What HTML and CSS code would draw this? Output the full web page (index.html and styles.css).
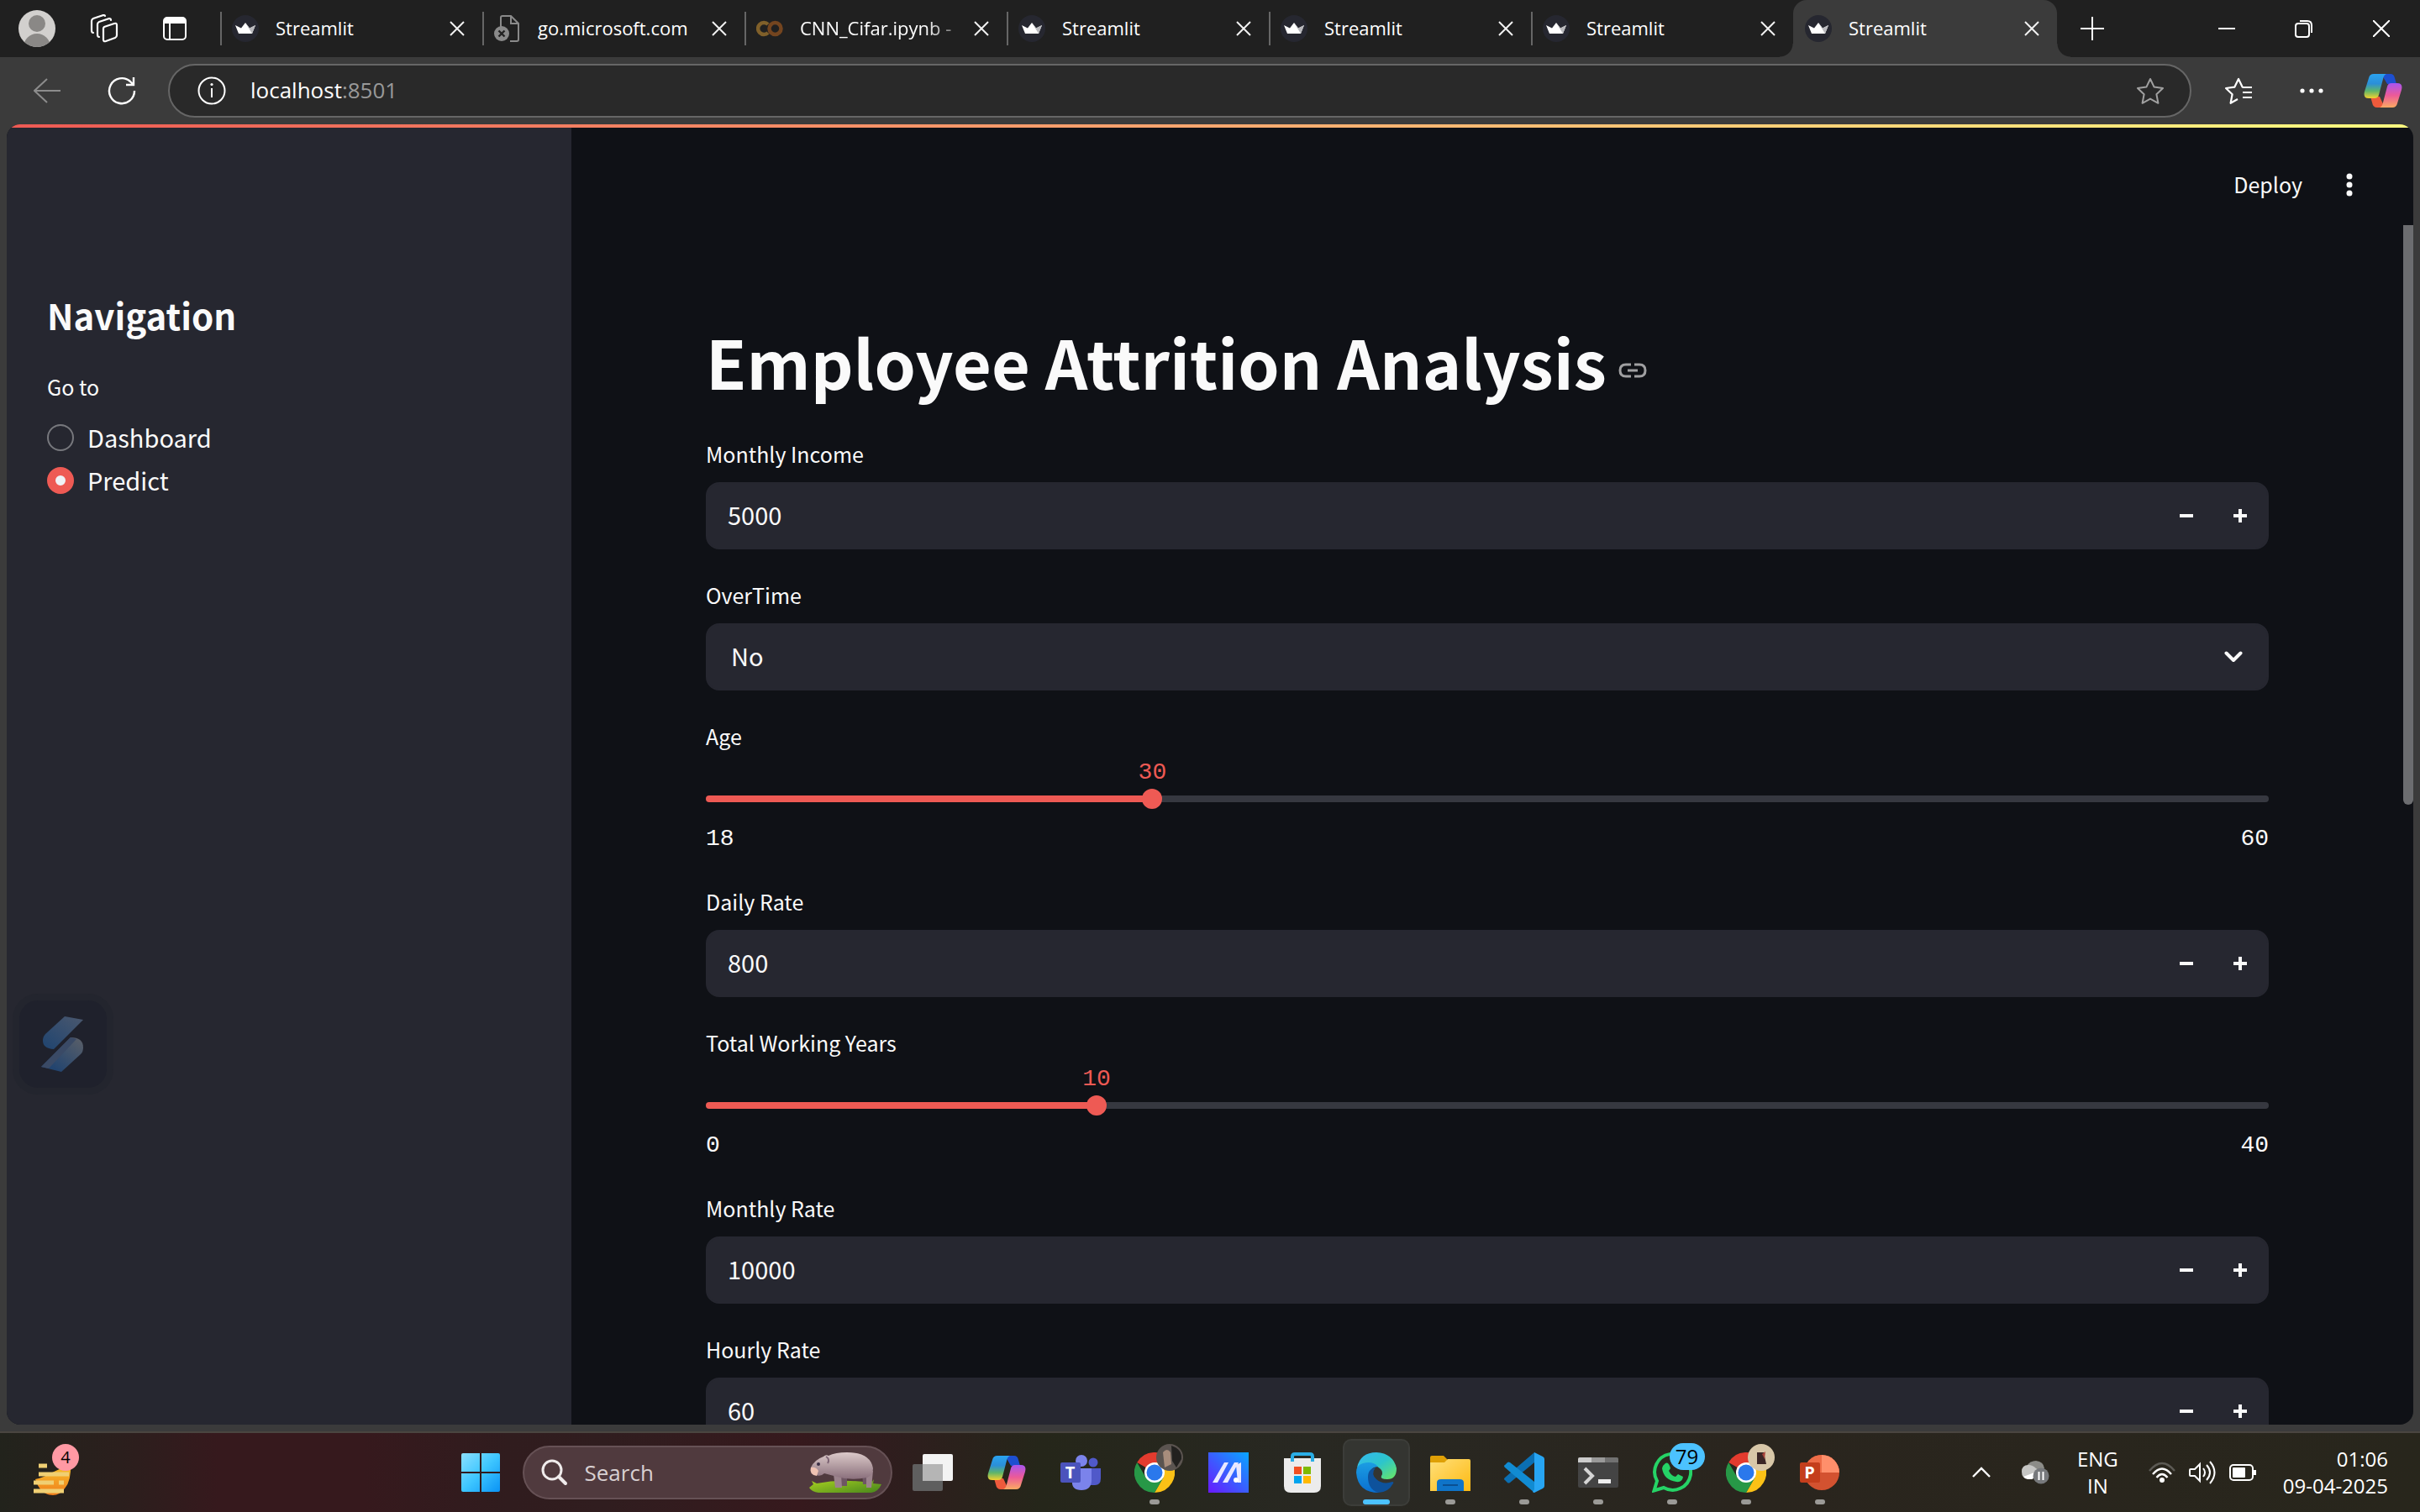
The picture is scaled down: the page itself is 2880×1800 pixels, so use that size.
FILE: index.html
```html
<!DOCTYPE html>
<html lang="en">
<head>
<meta charset="utf-8">
<title>Streamlit</title>
<link rel="stylesheet" href="styles.css">
</head>
<body>
<svg class="defs" aria-hidden="true">
  <defs>
    <linearGradient id="cpA" x1="0" y1="0" x2="0" y2="1"><stop offset="0" stop-color="#2aa3f0"/><stop offset=".4" stop-color="#2b8fd8"/><stop offset=".7" stop-color="#5fb56a"/><stop offset="1" stop-color="#f4d12e"/></linearGradient>
    <linearGradient id="cpB" x1="0" y1="0" x2="0" y2="1"><stop offset="0" stop-color="#a855f0"/><stop offset=".5" stop-color="#ec5a98"/><stop offset="1" stop-color="#fbaa62"/></linearGradient>
    <linearGradient id="win" x1="0" y1="0" x2="1" y2="1"><stop offset="0" stop-color="#8be0ff"/><stop offset=".5" stop-color="#3ec6ff"/><stop offset="1" stop-color="#0a93f5"/></linearGradient>
    <linearGradient id="arm" x1="0" y1="1" x2="1" y2="0"><stop offset="0" stop-color="#6a18ff"/><stop offset="1" stop-color="#08a6ff"/></linearGradient>
    <linearGradient id="edgeTop" x1="0" y1="0" x2="1" y2="1"><stop offset="0" stop-color="#35b8f0"/><stop offset=".5" stop-color="#2cc5cc"/><stop offset="1" stop-color="#6ce860"/></linearGradient>
    <linearGradient id="edgeMid" x1="0" y1="0" x2="0" y2="1"><stop offset="0" stop-color="#1b9de2"/><stop offset="1" stop-color="#0a6fd0"/></linearGradient>
    <linearGradient id="folder" x1="0" y1="0" x2="1" y2="1"><stop offset="0" stop-color="#ffe07a"/><stop offset="1" stop-color="#fdb912"/></linearGradient>
    <linearGradient id="logoA" x1="0" y1="1" x2="1" y2="0"><stop offset="0" stop-color="#1f4470"/><stop offset="1" stop-color="#4b586e"/></linearGradient>
    <linearGradient id="logoB" x1="0" y1="1" x2="1" y2="0"><stop offset=".2" stop-color="#22446f"/><stop offset="1" stop-color="#5c6068"/></linearGradient>
    <linearGradient id="hippo" x1="0" y1="0" x2="0" y2="1"><stop offset="0" stop-color="#dccaca"/><stop offset=".5" stop-color="#b39da2"/><stop offset="1" stop-color="#8a6f7c"/></linearGradient>
    <linearGradient id="grass" x1="0" y1="0" x2="1" y2="1"><stop offset="0" stop-color="#b2da21"/><stop offset="1" stop-color="#47851c"/></linearGradient>
    <linearGradient id="sun" x1="0" y1="0" x2="0" y2="1"><stop offset="0" stop-color="#f8c52d"/><stop offset="1" stop-color="#f07d1c"/></linearGradient>

    <symbol id="crown" viewBox="0 0 32 32"><circle cx="16" cy="16" r="16" fill="#262730"/><path d="M4 12l7 3.500L16 9l5 6.500 7-3.500-4 10H8z" fill="#fff"/><path d="M16 9l5 6.500 7-3.500-4 10z" fill="#b9b9bd"/></symbol>
    <symbol id="cross" viewBox="0 0 20 20"><path d="M2 2l16 16M18 2L2 18" fill="none" stroke="#f2f2f2" stroke-width="2"/></symbol>
    <symbol id="copilot" viewBox="0 0 46 42">
      <path d="M21 1h11q4 0 5 5l2 7H28z" fill="#1d4fd0"/>
      <path d="M25 41H16q-5 0-6-6l-2-7h11z" fill="#ee5a3c"/>
      <path d="M12 1h15q-3 1-4 6l-5 19q-1 4-5 4H6q-7 0-5-8L6 6q1-5 6-5z" fill="url(#cpA)"/>
      <path d="M34 41H19q3-1 4-6l5-19q1-4 5-4h7q7 0 5 8l-5 16q-1 5-6 5z" fill="url(#cpB)"/>
    </symbol>
    <symbol id="chrome" viewBox="0 0 48 48">
      <path d="M24 24L3.200 12A24 24 0 0 1 44.800 12H24z" fill="#e33b2e"/>
      <path d="M24 24L44.800 12A24 24 0 0 1 24 48l10.400-18z" fill="#fbc116"/>
      <path d="M24 24l10.400 6L24 48A24 24 0 0 1 3.200 12l10.400 18z" fill="#279847"/>
      <path d="M24 12h20.800L34 24z" fill="#fbc116"/>
      <circle cx="24" cy="24" r="12" fill="#fff"/><circle cx="24" cy="24" r="9.500" fill="#2a78ec"/>
    </symbol>
  </defs>
</svg>

<div class="desktop">
<header class="browser">
  <div class="tabstrip">
    <button class="icon-btn profile" aria-label="Profile"><svg width="46" height="46" viewBox="0 0 46 46"><clipPath id="pc"><circle cx="23" cy="23" r="22"/></clipPath><circle cx="23" cy="23" r="22" fill="#d2d0ce"/><g clip-path="url(#pc)" fill="#8a8886"><circle cx="23" cy="17" r="10"/><circle cx="23" cy="45" r="16"/></g></svg></button>
    <button class="icon-btn workspaces" aria-label="Workspaces"><svg width="34" height="34" viewBox="0 0 34 34" fill="none" stroke="#fff" stroke-width="2.200" stroke-linejoin="round" stroke-linecap="round"><path d="M17 15l12-4q3-1 3 2v12q0 2-2 3l-11 4q-3 1-3-2V17q0-1 1-2z"/><path d="M11 27q-2 0-2-3V12q0-2 2-3l12-4q2 0 2 2"/><path d="M4 22q-2 0-2-3V8q0-2 2-3l12-4q2 0 2 1"/></svg></button>
    <button class="icon-btn vertical" aria-label="Tab actions"><svg width="30" height="30" viewBox="0 0 30 30"><rect x="2" y="2" width="26" height="26" rx="4" fill="none" stroke="#fff" stroke-width="2"/><path d="M2 9V6q0-4 4-4h18q4 0 4 4v3z" fill="#fff"/><path d="M9 9v18" stroke="#fff" stroke-width="2"/></svg></button>
    <nav class="tabs" aria-label="Tabs">
      <div class="tab"><svg class="fav"><use href="#crown"/></svg><span class="tab-title">Streamlit</span><button class="tab-close" aria-label="Close tab"><svg><use href="#cross"/></svg></button></div>
      <div class="tab"><svg class="fav" viewBox="0 0 32 32"><path d="M8 14V3q0-2 2-2h10l9 9v19q0 2-2 2h-8M20 1v9h9" fill="none" stroke="#8a8a8a" stroke-width="2"/><circle cx="9" cy="22" r="9" fill="#8a8a8a"/><path d="M5.500 18.500l7 7m0-7l-7 7" stroke="#222" stroke-width="2.400"/></svg><span class="tab-title">go.microsoft.com</span><button class="tab-close" aria-label="Close tab"><svg><use href="#cross"/></svg></button></div>
      <div class="tab"><svg class="fav" viewBox="0 0 32 32" fill="none" stroke-width="4.500"><circle cx="22.500" cy="16" r="7" stroke="#74451f"/><path d="M14 11a7 7 0 1 0 0 10" stroke="#80602a"/></svg><span class="tab-title fade">CNN_Cifar.ipynb -</span><button class="tab-close" aria-label="Close tab"><svg><use href="#cross"/></svg></button></div>
      <div class="tab"><svg class="fav"><use href="#crown"/></svg><span class="tab-title">Streamlit</span><button class="tab-close" aria-label="Close tab"><svg><use href="#cross"/></svg></button></div>
      <div class="tab"><svg class="fav"><use href="#crown"/></svg><span class="tab-title">Streamlit</span><button class="tab-close" aria-label="Close tab"><svg><use href="#cross"/></svg></button></div>
      <div class="tab"><svg class="fav"><use href="#crown"/></svg><span class="tab-title">Streamlit</span><button class="tab-close" aria-label="Close tab"><svg><use href="#cross"/></svg></button></div>
      <div class="tab active"><svg class="fav"><use href="#crown"/></svg><span class="tab-title">Streamlit</span><button class="tab-close" aria-label="Close tab"><svg><use href="#cross"/></svg></button></div>
    </nav>
    <button class="icon-btn newtab" aria-label="New tab"><svg width="28" height="28" viewBox="0 0 28 28"><path d="M14 0v28M0 14h28" stroke="#fff" stroke-width="2"/></svg></button>
    <div class="window-controls">
      <button class="icon-btn" aria-label="Minimize"><svg width="20" height="20" viewBox="0 0 20 20"><path d="M0 10h20" stroke="#fff" stroke-width="2"/></svg></button>
      <button class="icon-btn" aria-label="Restore"><svg width="22" height="22" viewBox="0 0 22 22" fill="none" stroke="#fff" stroke-width="2"><rect x="1" y="5" width="16" height="16" rx="3"/><path d="M6 2h9q5 0 5 5v9"/></svg></button>
      <button class="icon-btn" aria-label="Close"><svg width="20" height="20" viewBox="0 0 20 20"><path d="M0 0l20 20M20 0L0 20" stroke="#fff" stroke-width="2"/></svg></button>
    </div>
  </div>
  <div class="toolbar">
    <button class="icon-btn" aria-label="Back"><svg width="32" height="30" viewBox="0 0 32 30"><path d="M16 1L1 15l15 14M1 15h31" fill="none" stroke="#8c8c8c" stroke-width="2"/></svg></button>
    <button class="icon-btn" aria-label="Reload"><svg width="34" height="34" viewBox="0 0 34 34" fill="none" stroke="#fff" stroke-width="2.400"><path d="M32 17a15 15 0 1 1-5-11l4 4M31 1v9h-9"/></svg></button>
    <div class="address">
      <svg width="34" height="34" viewBox="0 0 34 34"><circle cx="17" cy="17" r="15.500" fill="none" stroke="#fff" stroke-width="2"/><path d="M17 14v11" stroke="#fff" stroke-width="2"/><circle cx="17" cy="9.500" r="1.600" fill="#fff"/></svg>
      <span class="url">localhost<span class="port">:8501</span></span>
      <button class="icon-btn star" aria-label="Add to favorites"><svg width="34" height="32" viewBox="0 0 34 32"><path d="M17 2l4.600 9.600 10.400 1.400-7.600 7.200 2 10.600L17 25.600 7.600 30.800l2-10.600L2 13l10.400-1.400z" fill="none" stroke="#a0a0a0" stroke-width="2" stroke-linejoin="round"/></svg></button>
    </div>
    <button class="icon-btn" aria-label="Favorites"><svg width="34" height="32" viewBox="0 0 34 32" fill="none" stroke="#fff" stroke-width="2.200" stroke-linejoin="round"><path d="M22 11.600h-.400L17 2l-4.600 9.600L2 13l7.600 7.200-2 10.600L16 26M22 12h11M22 18h11M22 24h11"/></svg></button>
    <button class="icon-btn" aria-label="Settings"><svg width="28" height="6" viewBox="0 0 28 6" fill="#fff"><circle cx="3" cy="3" r="2.600"/><circle cx="14" cy="3" r="2.600"/><circle cx="25" cy="3" r="2.600"/></svg></button>
    <button class="icon-btn copilot" aria-label="Copilot"><svg width="46" height="42"><use href="#copilot"/></svg></button>
  </div>
</header>

<div class="frame">
<div class="page">
  <div class="decoration"></div>
  <div class="app">
    <aside class="sidebar">
      <h2>Navigation</h2>
      <fieldset class="radio-group">
        <legend>Go to</legend>
        <label class="radio"><input type="radio" name="nav">Dashboard</label>
        <label class="radio"><input type="radio" name="nav" checked>Predict</label>
      </fieldset>
    </aside>
    <main class="main">
      <div class="app-header">
        <button class="deploy">Deploy</button>
        <button class="icon-btn kebab" aria-label="Menu"><svg width="8" height="28" viewBox="0 0 8 28" fill="#fafafa"><circle cx="4" cy="4" r="3.500"/><circle cx="4" cy="14" r="3.500"/><circle cx="4" cy="24" r="3.500"/></svg></button>
      </div>
      <form class="content">
        <h1>Employee Attrition Analysis <a href="#title" aria-label="Link to heading"><svg width="34" height="18" viewBox="0 0 34 18"><path d="M15 2H9q-7 0-7 7t7 7h6M19 2h6q7 0 7 7t-7 7h-6M11 9h12" fill="none" stroke="#a0a0a2" stroke-width="3"/></svg></a></h1>
        <div class="field">
          <label for="income">Monthly Income</label>
          <div class="number"><input id="income" type="number" value="5000"><button type="button" class="step minus" aria-label="Decrease"></button><button type="button" class="step plus" aria-label="Increase"></button></div>
        </div>
        <div class="field">
          <label for="overtime">OverTime</label>
          <div class="select"><select id="overtime"><option>No</option><option>Yes</option></select><svg width="22" height="14" viewBox="0 0 22 14"><path d="M2.500 2.500L11 11l8.500-8.500" fill="none" stroke="#fafafa" stroke-width="4" stroke-linecap="round" stroke-linejoin="round"/></svg></div>
        </div>
        <div class="field">
          <label for="age">Age</label>
          <div class="slider" style="--p:28.571%"><output for="age">30</output><div class="track"><input id="age" type="range" min="18" max="60" value="30"></div><div class="ticks"><span>18</span><span>60</span></div></div>
        </div>
        <div class="field">
          <label for="daily">Daily Rate</label>
          <div class="number"><input id="daily" type="number" value="800"><button type="button" class="step minus" aria-label="Decrease"></button><button type="button" class="step plus" aria-label="Increase"></button></div>
        </div>
        <div class="field">
          <label for="years">Total Working Years</label>
          <div class="slider" style="--p:25%"><output for="years">10</output><div class="track"><input id="years" type="range" min="0" max="40" value="10"></div><div class="ticks"><span>0</span><span>40</span></div></div>
        </div>
        <div class="field">
          <label for="monthly">Monthly Rate</label>
          <div class="number"><input id="monthly" type="number" value="10000"><button type="button" class="step minus" aria-label="Decrease"></button><button type="button" class="step plus" aria-label="Increase"></button></div>
        </div>
        <div class="field">
          <label for="hourly">Hourly Rate</label>
          <div class="number"><input id="hourly" type="number" value="60"><button type="button" class="step minus" aria-label="Decrease"></button><button type="button" class="step plus" aria-label="Increase"></button></div>
        </div>
      </form>
      <div class="scroll-thumb"></div>
    </main>
  </div>
  <button class="floating" aria-label="Extension"><svg width="52" height="68" viewBox="0 0 52 68"><path d="M28 1l22 4-35 35q-13-1-13-10 0-5 3-8z" fill="url(#logoA)"/><path d="M35 26q15 0 15 12 0 5-3 8L24 67 0 61z" fill="url(#logoB)"/><path d="M35 26l7 2L9 63l-9-2z" fill="#3a4a66"/></svg></button>
</div>
</div>

<footer class="taskbar">
  <div class="side widgets">
    <button class="icon-btn" aria-label="Widgets"><svg width="50" height="60" viewBox="0 0 50 60"><path d="M4 38q10-2 20-8l22-10q1 20-7 29-6 8-14 8-15 0-21-19z" fill="url(#sun)"/><path d="M8 22h10M8 32h36M2 42h24M32 42h6M2 52h36" stroke="#f0cf73" stroke-width="5"/></svg><span class="badge pink">4</span></button>
  </div>
  <div class="apps">
    <button class="icon-btn start" aria-label="Start"><svg width="46" height="46" viewBox="0 0 46 46"><path d="M0 2q0-2 2-2h20v22H0zM24 0h20q2 0 2 2v20H24zM0 24h22v22H2q-2 0-2-2zM24 24h22v20q0 2-2 2H24z" fill="url(#win)"/></svg></button>
    <label class="search"><svg width="32" height="32" viewBox="0 0 32 32"><circle cx="13" cy="13" r="11" fill="none" stroke="#efebeb" stroke-width="3"/><path d="M21 21l8 8" stroke="#efebeb" stroke-width="4" stroke-linecap="round"/></svg><input type="text" placeholder="Search" aria-label="Search">
      <svg width="88" height="48" viewBox="0 0 88 48"><path d="M1 42l5-4-2-4 6 3q30-6 62-1l2-7 2 6 2-3-1 5 10 1q-4 9-12 10H12Q4 47 1 42z" fill="url(#grass)"/><path d="M38 24h8v16h-7zM64 22h8l-1 16h-6z" fill="#6e5663"/><path d="M30 26h9l1 16h-8zM69 22h8l-2 20h-6z" fill="#9b838c"/><path d="M3 18q4-9 15-13 3-3 6-1 8-4 22-4 28 0 31 19 0 8-7 11-20 4-36-1l-15-4q-4 4-10 2-8-1-6-9z" fill="url(#hippo)"/><path d="M3 18q6-1 9 4l-2 6q-9-1-7-10z" fill="#efc2b2"/><circle cx="12" cy="14" r="2" fill="#3a2f45"/><path d="M21 5q5 3 2 8" stroke="#7d6474" fill="none" stroke-width="2"/></svg></label>
    <div class="pins">
    <button class="app-btn" aria-label="Task view"><svg viewBox="0 0 48 48"><rect x="12" y="2" width="36" height="32" rx="2" fill="#f3f3f3"/><rect y="14" width="36" height="32" rx="2" fill="#5f5f5f"/><rect x="12" y="14" width="24" height="20" fill="#b5b5b5"/></svg></button>
    <button class="app-btn" aria-label="Copilot"><svg viewBox="0 0 48 48"><use href="#copilot" x="1" y="3" width="46" height="42"/></svg></button>
    <button class="app-btn" aria-label="Teams"><svg viewBox="0 0 48 48"><circle cx="25" cy="10" r="7" fill="#7b83eb"/><circle cx="39" cy="12" r="5.500" fill="#5059c9"/><path d="M34 19h14v12q0 8-7 8h-7z" fill="#5059c9"/><path d="M14 19h23v14q0 12-12 12T14 34z" fill="#7b83eb"/><rect y="12" width="24" height="24" rx="2" fill="#4b53bc"/></svg><span class="glyph teams">T</span></button>
    <button class="app-btn running" aria-label="Chrome"><svg viewBox="0 0 48 48"><use href="#chrome"/></svg><svg class="person" viewBox="0 0 32 32"><circle cx="16" cy="16" r="16" fill="#5b5450"/><path d="M8 10q5-6 9 0l1 14-8 4z" fill="#a88d7c"/><path d="M18 2q13 4 12 16l-6 10-5-8z" fill="#22211f"/></svg></button>
    <button class="app-btn" aria-label="Armoury"><svg viewBox="0 0 48 48"><rect width="48" height="48" fill="url(#arm)"/><path d="M5 36l14-24h5L11 36zM17 36l14-24h5L23 36zM33 15l6-3v24h-4z" fill="#e8e8ff"/><circle cx="33" cy="33" r="3" fill="#fff"/></svg></button>
    <button class="app-btn" aria-label="Store"><svg viewBox="0 0 48 48"><path d="M2 7h44v33q0 8-8 8H10q-8 0-8-8z" fill="#ececec"/><path d="M12 11V5q0-3 3-3h18q3 0 3 3v6" fill="none" stroke="#2aaee6" stroke-width="4"/><path d="M14 17h9v9h-9z" fill="#f25022"/><path d="M25 17h9v9h-9z" fill="#7fba00"/><path d="M14 28h9v9h-9z" fill="#00a4ef"/><path d="M25 28h9v9h-9z" fill="#ffb900"/></svg></button>
    <button class="app-btn running current" aria-label="Edge"><svg viewBox="0 0 48 48"><path d="M1 18Q5 0 24 0q20 1 24 19 0 13-11 13-9 0-7-4 3-5-2-9-10-9-27-1z" fill="url(#edgeTop)"/><path d="M0 24q0-9 8-11 12-3 18 4-7 0-10 6-4 8 3 17 4 5 8 8Q2 48 0 24z" fill="url(#edgeMid)"/><path d="M14 29q0-9 9-11-6 8 1 14 8 7 19 3 2 0 1 2-6 11-18 11-12-4-12-19z" fill="#0e529c"/></svg></button>
    <button class="app-btn running" aria-label="File Explorer"><svg viewBox="0 0 48 48"><path d="M0 6q0-2 2-2h14l5 5v8H0z" fill="#dfa006"/><path d="M0 12h17l4-4h25q2 0 2 2v36H0z" fill="url(#folder)"/><path d="M8 46V36q0-4 5-4h22q5 0 5 4v10z" fill="#0f74c8"/><path d="M15 39h18" stroke="#0a4f91" stroke-width="2"/></svg></button>
    <button class="app-btn running" aria-label="VS Code"><svg viewBox="0 0 48 48"><path d="M1 30q-2 2 0 3l3 3q1 1 3 0L36 12V0z" fill="#0b6fb3"/><path d="M1 18q-2-2 0-3l3-3q1-1 3 0l29 23v13z" fill="#118bd2"/><path d="M36 0l10 5q2 1 2 3v32q0 2-2 3l-10 5q-1 0-2-1l2-3V4z" fill="#27a5f3"/></svg></button>
    <button class="app-btn running" aria-label="Terminal"><svg viewBox="0 0 48 48"><rect y="6" width="48" height="36" rx="2" fill="#444"/><path d="M0 12V8q0-2 2-2h14v6z" fill="#ccc"/><path d="M16 6h16v6H16z" fill="#999"/><path d="M32 6h14q2 0 2 2v4H32z" fill="#717171"/><path d="M8 19l9 9-9 9" fill="none" stroke="#d5d5d5" stroke-width="4"/><path d="M24 32h15v5H24z" fill="#eee"/></svg></button>
    <button class="app-btn running" aria-label="WhatsApp"><svg viewBox="0 0 48 48"><path d="M2.500 45.500L6 34A21.500 21.500 0 1 1 14 42z" fill="none" stroke="#25d366" stroke-width="4"/><path d="M16 13q3-2 5 3l1 3-2 3q3 6 8 7l3-3 6 3q-1 7-8 6-15-2-17-16 1-4 4-6z" fill="#25d366"/></svg><span class="badge blue">79</span></button>
    <button class="app-btn running" aria-label="Chrome second profile"><svg viewBox="0 0 48 48"><use href="#chrome"/></svg><svg class="person" viewBox="0 0 32 32"><circle cx="16" cy="16" r="16" fill="#d8c7a8"/><path d="M11 10h8l3 14H11z" fill="#3b2626"/><path d="M17 12l4-3-1 9z" fill="#a8433a"/></svg></button>
    <button class="app-btn running" aria-label="PowerPoint"><svg viewBox="0 0 48 48"><circle cx="26" cy="24" r="21" fill="#d35230"/><path d="M26 3a21 21 0 0 1 21 21H26z" fill="#ff8f6b"/><path d="M26 3v21H5A21 21 0 0 1 26 3z" fill="#ed6c47"/><rect y="12" width="24" height="24" rx="2" fill="#c43e1c"/></svg><span class="glyph ppt">P</span></button>
    </div>
  </div>
  <div class="side tray">
    <button class="icon-btn" aria-label="Hidden icons"><svg width="22" height="14" viewBox="0 0 22 14"><path d="M1 12L11 2l10 10" fill="none" stroke="#fff" stroke-width="2.400"/></svg></button>
    <button class="icon-btn" aria-label="OneDrive"><svg width="34" height="28" viewBox="0 0 34 28"><path d="M7 6q4-6 11-6 9 1 10 9l-14 8z" fill="#8c8c88"/><path d="M1 13q0-8 8-8 5 0 9 4l7 5-6 7H8q-7 0-7-8z" fill="#c6c6c4"/><path d="M3 19l13-5-2 8H8q-3 0-5-3z" fill="#fff"/><circle cx="24" cy="18" r="9.500" fill="#77797c"/><path d="M21.500 13v10M26.500 13v10" stroke="#fff" stroke-width="2"/></svg></button>
    <button class="lang">ENG<br>IN</button>
    <button class="status" aria-label="Network, volume, battery">
      <svg width="32" height="26" viewBox="0 0 32 26" fill="none" stroke="#fff" stroke-width="2.400"><path d="M1 11q15-18 30 0" stroke="#5c5a54"/><path d="M5 15q11-13 22 0M9.500 19q6.500-8 13 0"/><circle cx="16" cy="22" r="3" fill="#fff" stroke="none"/></svg>
      <svg width="32" height="28" viewBox="0 0 32 28" fill="none" stroke="#fff" stroke-width="2"><path d="M1 11q0-1 1-1h5l6-6v20l-6-6H2q-1 0-1-1z"/><path d="M17 9q4 5 0 10M21 5q8 9 0 18M25 1q11 13 0 26"/></svg>
      <svg width="32" height="22" viewBox="0 0 32 22"><rect x="1" y="2" width="27" height="18" rx="4" fill="none" stroke="#fff" stroke-width="2"/><rect x="4" y="5" width="15" height="12" rx="1" fill="#fff"/><path d="M29 8h3v6h-3z" fill="#fff"/></svg>
    </button>
    <button class="clock">01:06<br>09-04-2025</button>
  </div>
</footer>
</div>
</body>
</html>
```
FILE: styles.css
```css
* { box-sizing: border-box; }

body {
  margin: 0;
  background: #3b3b3b;
  color: #fff;
  font-family: "Open Sans", "Noto Sans", sans-serif;
}

button, input, select {
  font: inherit;
  color: inherit;
  border: 0;
  background: none;
  padding: 0;
  margin: 0;
}

svg { display: block; flex: none; }
.defs { position: absolute; width: 0; height: 0; }

.desktop { display: flex; flex-direction: column; height: 100vh; overflow: hidden; }

.icon-btn { display: flex; align-items: center; justify-content: center; }

/* Tab strip */
.tabstrip {
  display: flex;
  align-items: center;
  height: 68px;
  background: #202020;
}
.profile { width: 46px; margin-left: 21px; }
.workspaces { width: 34px; margin-left: 40px; }
.vertical { width: 30px; margin-left: 52px; }
.tabs { display: flex; flex: 0 1 2186px; height: 68px; margin-left: 39px; min-width: 0; }
.tab {
  position: relative;
  flex: 1 1 0;
  min-width: 0;
  display: flex;
  align-items: center;
  padding: 0 20px 0 12px;
  gap: 20px;
}
.tab::before {
  content: "";
  align-self: center;
  flex: none;
  width: 2px;
  height: 40px;
  margin: 0 -8px 0 -12px;
  background: #666;
}
.tab.active {
  background: #3b3b3b;
  border-radius: 16px 16px 0 0;
  padding-left: 14px;
}
.tab.active::before {
  position: absolute;
  left: -16px;
  bottom: 0;
  width: 16px;
  height: 16px;
  margin: 0;
  background: radial-gradient(circle at 0 0, #202020 15px, #3b3b3b 16px);
}
.tab.active::after {
  content: "";
  position: absolute;
  right: -16px;
  bottom: 0;
  width: 16px;
  height: 16px;
  background: radial-gradient(circle at 100% 0, #202020 15px, #3b3b3b 16px);
}
.fav { width: 32px; height: 32px; }
.tab-title {
  flex: 1;
  min-width: 0;
  padding-bottom: 2px;
  white-space: nowrap;
  font-size: 22px;
  line-height: 32px;
}
.tab-title.fade { mask-image: linear-gradient(90deg, #000 80%, transparent 110%); }
.tab-close { width: 20px; height: 20px; }
.tab-close svg { width: 20px; height: 20px; }
.newtab { width: 28px; margin-left: 28px; }
.window-controls { display: flex; margin-left: auto; }
.window-controls .icon-btn { width: 92px; height: 68px; }

/* Toolbar */
.toolbar {
  display: flex;
  align-items: center;
  height: 80px;
  padding: 0 21px 0 40px;
}
.toolbar > .icon-btn + .icon-btn { margin-left: 56px; }
.toolbar > .icon-btn + .copilot { margin-left: 48px; }
.address {
  flex: 1;
  display: flex;
  align-items: center;
  height: 64px;
  margin: 0 39px 0 38px;
  padding: 0 30px 0 33px;
  border: 2px solid #666;
  border-radius: 32px;
  background: #292929;
}
.url { margin-left: 29px; padding-bottom: 2px; font-size: 26px; line-height: 36px; }
.port { color: #999; }
.star { margin-left: auto; }

/* Page frame */
.frame { flex: 1; min-height: 0; padding: 0 8px 8px; }
.page {
  position: relative;
  display: flex;
  flex-direction: column;
  height: 100%;
  overflow: hidden;
  border-radius: 16px;
  background: #0f1116;
  font-family: "Noto Sans CJK SC", sans-serif;
  color: #fafafa;
}
.decoration { flex: none; height: 4px; background: linear-gradient(90deg, #ee5a54, #f9a870 50%, #fffd80); }
.app { display: flex; flex: 1; min-height: 0; }

.sidebar { flex: none; width: 672px; padding: 191px 48px 0; background: #262730; }
.sidebar h2 { margin: 0 0 29px; font-size: 42px; line-height: 64px; font-weight: 600; }
.radio-group { margin: 0; padding: 0; border: 0; font-size: 29px; }
.radio-group legend { padding: 0; margin-bottom: 11px; font-size: 25px; line-height: 48px; }
.radio { display: flex; align-items: center; gap: 16px; height: 51px; line-height: 51px; padding-bottom: 0; }
.radio input {
  appearance: none;
  width: 32px;
  height: 32px;
  border: 2px solid #77787d;
  border-radius: 50%;
}
.radio input:checked { border: 10px solid #ee5a54; background: #f0f2f6; }

.main { position: relative; flex: 1; min-width: 0; overflow: hidden; }
.app-header {
  display: flex;
  align-items: center;
  justify-content: flex-end;
  gap: 52px;
  height: 136px;
  padding-right: 72px;
}
.deploy { padding-bottom: 2px; font-size: 25px; line-height: 40px; }
.content { display: flex; flex-direction: column; gap: 32px; padding: 92px 172px 0 160px; }
.content h1 {
  display: flex;
  align-items: center;
  gap: 14px;
  margin: 0;
  height: 106px;
  font-size: 79px;
  line-height: 100px;
  padding-bottom: 6px;
  font-weight: 700;
}
.content h1 a { padding-top: 22px; }
.field > label { display: block; height: 48px; font-size: 25px; line-height: 44px; }

.number, .select {
  display: flex;
  align-items: center;
  height: 80px;
  margin-top: 8px;
  border: 2px solid #262730;
  border-radius: 16px;
  background: #262730;
  font-size: 29px;
}
.number input {
  flex: 1;
  min-width: 0;
  height: 76px;
  padding: 0 0 4px 24px;
  appearance: textfield;
}
.number input::-webkit-inner-spin-button { appearance: none; margin: 0; }
.step { display: flex; align-items: center; justify-content: center; width: 64px; height: 76px; }
.step::before {
  content: "";
  width: 16px;
  height: 16px;
  background: linear-gradient(#fafafa, #fafafa) center / 16px 4px no-repeat;
}
.step.plus::before {
  background:
    linear-gradient(#fafafa, #fafafa) center / 16px 4px no-repeat,
    linear-gradient(#fafafa, #fafafa) center / 4px 16px no-repeat;
}
.select { display: grid; }
.select select { grid-area: 1 / 1; width: 100%; height: 76px; padding: 0 0 4px 28px; appearance: none; }
.select svg { grid-area: 1 / 1; justify-self: end; margin-right: 29px; pointer-events: none; }

.slider {
  position: relative;
  padding-top: 45px;
  font-family: "Liberation Mono", monospace;
  font-size: 28px;
}
.slider output {
  position: absolute;
  top: 0;
  left: var(--p);
  transform: translateX(-50%);
  line-height: 36px;
  color: #ee5a54;
}
.track {
  height: 8px;
  border-radius: 4px;
  background: linear-gradient(90deg, #ee5a54 var(--p), #363840 var(--p));
}
.track input {
  display: block;
  appearance: none;
  width: calc(100% + 24px);
  height: 24px;
  margin: 0 -12px;
  position: relative;
  top: -8px;
}
.track input::-webkit-slider-thumb {
  appearance: none;
  width: 24px;
  height: 24px;
  border-radius: 50%;
  background: #ee5a54;
}
.ticks { display: flex; justify-content: space-between; padding-top: 24px; line-height: 40px; }

.scroll-thumb {
  position: absolute;
  top: 116px;
  right: 0;
  width: 12px;
  height: 690px;
  border-radius: 0 0 6px 6px;
  background: #6c6d70;
}
.floating {
  position: absolute;
  left: 7px;
  bottom: 393px;
  display: grid;
  place-items: center;
  width: 120px;
  height: 120px;
  border: 8px solid #23252e;
  border-radius: 30px;
  background: #1f212c;
}

/* Taskbar */
.taskbar {
  flex: none;
  display: flex;
  align-items: center;
  height: 96px;
  border-top: 2px solid #4a4540;
  background: linear-gradient(90deg, #22231c 0, #2b1f1d 5%, #36191d 9%, #36191d 15%, #301c1e 21%, #301d1f 25%, #36191d 33%, #301c1e 36%, #25261a 43%, #282822 54%, #2a251e 72%, #28261c);
}
.side { display: flex; align-items: center; }
.widgets { flex: 1 1 0; padding-left: 38px; }
.widgets .icon-btn { position: relative; }
.badge {
  position: absolute;
  height: 32px;
  border-radius: 16px;
  color: #000;
  font-size: 20px;
  line-height: 32px;
  text-align: center;
}
.badge.pink { top: -4px; right: -6px; width: 32px; background: #ff99a4; }
.badge.blue { top: 3px; right: -1px; width: 42px; font-size: 24px; background: #4cc2ff; }

.apps { display: flex; align-items: center; }
.start { width: 46px; margin-right: 27px; }
.search {
  display: flex;
  align-items: center;
  width: 440px;
  height: 64px;
  padding: 0 10px 0 20px;
  border: 2px solid #665155;
  border-radius: 32px;
  background: #503a3e;
}
.search input { flex: 1; min-width: 0; margin-left: 20px; font-size: 26px; line-height: 36px; }
.search input::placeholder { color: #d8d0d1; opacity: 1; }
.pins { display: flex; margin-left: 4px; }
.app-btn {
  position: relative;
  display: grid;
  place-items: center;
  width: 80px;
  height: 80px;
  margin: 0 4px;
  border: 2px solid transparent;
  border-radius: 10px;
}
.app-btn > svg { width: 48px; height: 48px; }
.app-btn > .person { position: absolute; top: 4px; right: 4px; width: 32px; height: 32px; }
.app-btn.current { border-color: #3c3d39; background: #343531; }
.app-btn.running::after {
  content: "";
  position: absolute;
  bottom: 0;
  width: 12px;
  height: 6px;
  border-radius: 3px;
  background: #9b9a97;
}
.app-btn.current::after { width: 32px; background: #4cc2ff; }
.glyph { position: absolute; left: 14px; width: 24px; font-size: 20px; line-height: 24px; font-weight: 700; text-align: center; }

.tray { flex: 1 1 160px; justify-content: flex-end; padding-right: 38px; font-size: 24px; line-height: 32px; }
.lang { margin-left: 33px; text-align: center; }
.tray .icon-btn + .icon-btn { margin-left: 36px; }
.status { display: flex; align-items: center; gap: 16px; margin-left: 36px; }
.clock { margin-left: 32px; text-align: right; }
```
